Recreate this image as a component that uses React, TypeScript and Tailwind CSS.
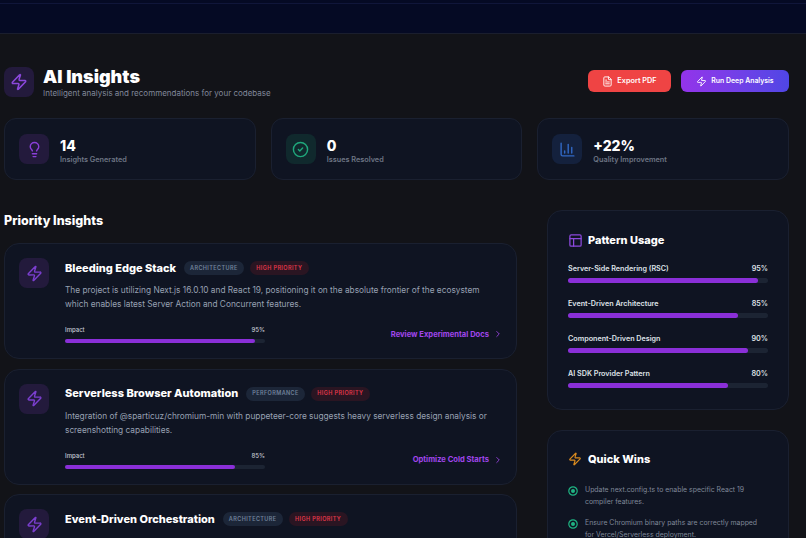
import { BarChart3, CheckCircle2, ChevronRight, FileText, Layout, Lightbulb, Zap } from 'lucide-react';

const stats = [
  { value: '14', label: 'Insights Generated', Icon: Lightbulb, box: 'bg-[#231a3c]', color: 'text-[#8b3fd9]' },
  { value: '0', label: 'Issues Resolved', Icon: CheckCircle2, box: 'bg-[#10292d]', color: 'text-[#1fa87c]' },
  { value: '+22%', label: 'Quality Improvement', Icon: BarChart3, box: 'bg-[#14213d]', color: 'text-[#3168c4]' },
];

const insights = [
  {
    title: 'Bleeding Edge Stack',
    tag: 'ARCHITECTURE',
    text: 'The project is utilizing Next.js 16.0.10 and React 19, positioning it on the absolute frontier of the ecosystem which enables latest Server Action and Concurrent features.',
    impact: 95,
    action: 'Review Experimental Docs',
  },
  {
    title: 'Serverless Browser Automation',
    tag: 'PERFORMANCE',
    text: 'Integration of @sparticuz/chromium-min with puppeteer-core suggests heavy serverless design analysis or screenshotting capabilities.',
    impact: 85,
    action: 'Optimize Cold Starts',
  },
  {
    title: 'Event-Driven Orchestration',
    tag: 'ARCHITECTURE',
    text: '',
    impact: 0,
    action: '',
  },
];

const patterns = [
  { name: 'Server-Side Rendering (RSC)', value: 95 },
  { name: 'Event-Driven Architecture', value: 85 },
  { name: 'Component-Driven Design', value: 90 },
  { name: 'AI SDK Provider Pattern', value: 80 },
];

const wins = [
  'Update next.config.ts to enable specific React 19 compiler features.',
  'Ensure Chromium binary paths are correctly mapped for Vercel/Serverless deployment.',
];

function InsightCard({ item }: { item: (typeof insights)[number] }) {
  return (
    <div className="h-[116px] shrink-0 rounded-[15px] border border-[#1a2030] bg-[#0f1422] pl-[14px] pr-[13px] pt-[14px] flex gap-[16px]">
      <div className="w-[30px] h-[30px] shrink-0 rounded-[8px] bg-[#231a3c] flex items-center justify-center">
        <Zap className="w-[17px] h-[17px] text-[#7c3fd0]" strokeWidth={2} />
      </div>
      <div className="flex-1 min-w-0">
        <div className="mt-[1px] flex items-center h-[18px] gap-[6px]">
          <span className="mr-[2px] text-[11px] font-extrabold text-white whitespace-nowrap">{item.title}</span>
          <span className="h-[14px] px-[6px] rounded-full bg-[#1c2638] text-[5.5px] font-semibold tracking-[0.4px] text-[#71829b] flex items-center">
            {item.tag}
          </span>
          <span className="h-[14px] px-[6.5px] rounded-full bg-[#2a1522] text-[5.5px] font-semibold tracking-[0.4px] text-[#e0374a] flex items-center">
            HIGH PRIORITY
          </span>
        </div>
        {item.text && (
          <>
            <p className="mt-[6px] text-[8.3px] leading-[14px] text-[#98a1b2] w-[425px]">{item.text}</p>
            <div className="mt-[15px] flex items-center justify-between">
              <div className="w-[200px]">
                <div className="flex justify-between text-[6px] leading-[8px] font-medium text-[#c3c8d2]">
                  <span>Impact</span>
                  <span>{item.impact}%</span>
                </div>
                <div className="mt-[5px] h-[4px] rounded-full bg-[#1c2433]">
                  <div className="h-full rounded-full bg-[#8a2fd8]" style={{ width: `${item.impact}%` }} />
                </div>
              </div>
              <div className="flex items-center gap-[4px] text-[7.6px] font-bold text-[#a146ec]">
                {item.action}
                <ChevronRight className="w-[10px] h-[10px]" strokeWidth={2} />
              </div>
            </div>
          </>
        )}
      </div>
    </div>
  );
}

export default function App() {
  return (
    <div className="h-[538px] w-[806px] overflow-hidden bg-[#121318] text-white font-['Inter',sans-serif]">
      <div className="h-[34px] border-b border-[#1a1e2e] bg-[#050a24] pt-[3px]">
        <div className="h-px bg-[#10163a]" />
      </div>

      <div className="pl-[4px] pr-[17px] pt-[32px]">
        <div className="flex items-center justify-between">
          <div className="flex items-center gap-[9px]">
            <div className="w-[30px] h-[30px] rounded-[8px] bg-[#231a3c] flex items-center justify-center">
              <Zap className="w-[18px] h-[18px] text-[#8b48dc]" strokeWidth={2} />
            </div>
            <div className="mt-[1px] -mb-[1px]">
              <h1 className="text-[18px] leading-[20px] font-black text-white">AI Insights</h1>
              <p className="text-[8px] leading-[12px] text-[#81889a]">Intelligent analysis and recommendations for your codebase</p>
            </div>
          </div>
          <div className="flex items-center gap-[10px] -mt-[2px]">
            <button className="h-[22px] w-[83px] rounded-[6px] bg-[#ef4444] flex items-center justify-center gap-[4px] text-[7.3px] font-semibold text-white">
              <FileText className="w-[11px] h-[11px]" />
              Export PDF
            </button>
            <button className="h-[22px] w-[108px] rounded-[6px] bg-gradient-to-r from-[#9333ea] to-[#4f46e5] flex items-center justify-center gap-[4px] text-[6.9px] font-semibold text-white">
              <Zap className="w-[11px] h-[11px]" />
              Run Deep Analysis
            </button>
          </div>
        </div>

        <div className="mt-[20px] grid grid-cols-3 gap-[15px]">
          {stats.map(({ value, label, Icon, box, color }) => (
            <div key={label} className="h-[62px] rounded-[12px] border border-[#1a2030] bg-[#0f1422] pl-[14px] flex items-center gap-[11px]">
              <div className={`w-[30px] h-[30px] rounded-[8px] flex items-center justify-center ${box}`}>
                <Icon className={`w-[17px] h-[17px] ${color}`} strokeWidth={2} />
              </div>
              <div className="pt-[4px]">
                <div className="text-[14px] leading-[17px] font-extrabold text-white">{value}</div>
                <div className="text-[7.3px] leading-[11px] font-semibold text-[#6d7484]">{label}</div>
              </div>
            </div>
          ))}
        </div>

        <div className="mt-[30px] flex gap-[30px] items-start">
          <div className="w-[513px] shrink-0 pt-[2px]">
            <h2 className="text-[12.5px] leading-[17px] font-extrabold text-white">Priority Insights</h2>
            <div className="mt-[14px] flex flex-col gap-[9.5px]">
              {insights.map((item) => (
                <InsightCard key={item.title} item={item} />
              ))}
            </div>
          </div>

          <div className="flex-1 flex flex-col gap-[20px]">
            <div className="h-[200px] rounded-[15px] border border-[#1a2030] bg-[#0f1422] px-[20px] pt-[21px]">
              <div className="flex items-center gap-[5px] h-[16px]">
                <Layout className="w-[15px] h-[15px] text-[#8b48dc]" strokeWidth={2} />
                <span className="text-[11px] font-extrabold text-white">Pattern Usage</span>
              </div>
              <div className="mt-[16px] flex flex-col gap-[16.5px]">
                {patterns.map((p) => (
                  <div key={p.name}>
                    <div className="flex justify-between text-[7.2px] leading-[10px] font-semibold text-[#dfe2e8]">
                      <span>{p.name}</span>
                      <span>{p.value}%</span>
                    </div>
                    <div className="mt-[4px] h-[4.5px] rounded-full bg-[#1c2433]">
                      <div className="h-full rounded-full bg-[#8a2fd8]" style={{ width: `${p.value}%` }} />
                    </div>
                  </div>
                ))}
              </div>
            </div>

            <div className="h-[200px] rounded-[15px] border border-[#1a2030] bg-[#0f1422] px-[20px] pt-[20px]">
              <div className="flex items-center gap-[6px] h-[16px]">
                <Zap className="w-[14px] h-[14px] text-[#d98a1f]" strokeWidth={2} />
                <span className="text-[11px] font-extrabold text-white">Quick Wins</span>
              </div>
              <div className="mt-[17px] flex flex-col gap-[9px]">
                {wins.map((w) => (
                  <div key={w} className="flex gap-[7px]">
                    <svg viewBox="0 0 10 10" className="w-[10px] h-[10px] mt-[2px] shrink-0 text-[#1fb583]">
                      <circle cx="5" cy="5" r="4.2" fill="none" stroke="currentColor" strokeWidth="1.2" />
                      <circle cx="5" cy="5" r="2" fill="currentColor" />
                    </svg>
                    <p className="text-[6.9px] leading-[12px] text-[#7f8798] w-[178px]">{w}</p>
                  </div>
                ))}
              </div>
            </div>
          </div>
        </div>
      </div>
    </div>
  );
}
